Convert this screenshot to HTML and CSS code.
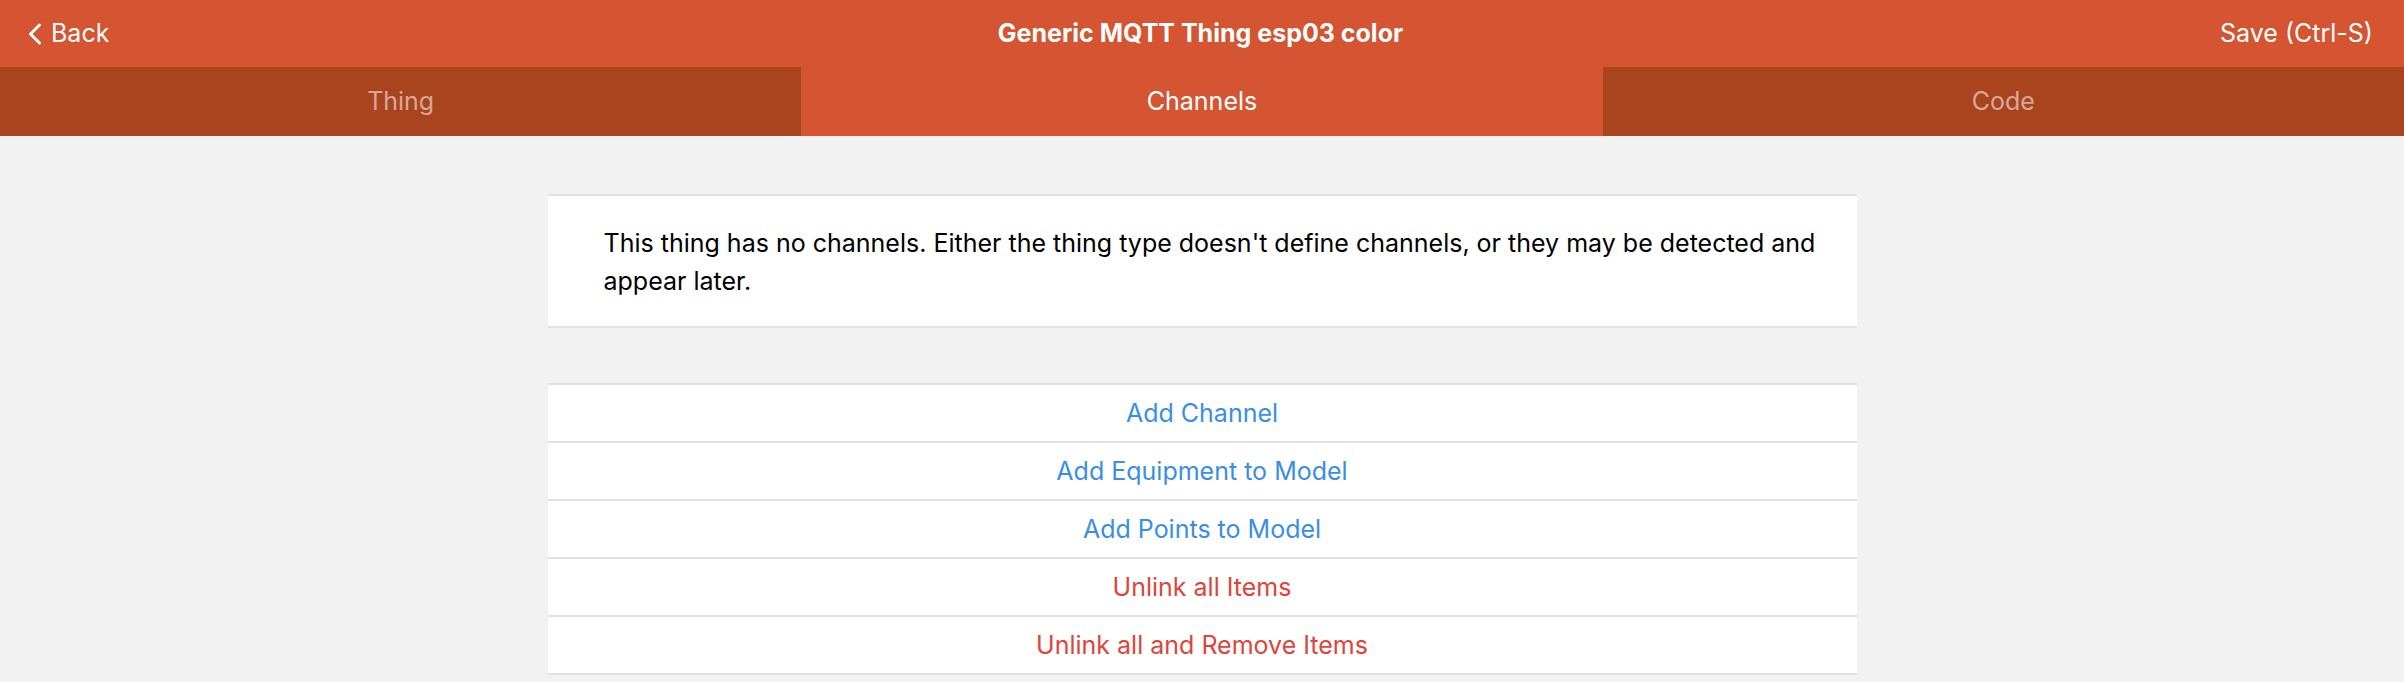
FILE: index.html
```html
<!DOCTYPE html>
<html lang="en">
<head>
<meta charset="utf-8">
<title>Generic MQTT Thing esp03 color</title>
<link rel="stylesheet" href="styles.css">
</head>
<body>
<div class="app">
  <header class="navbar">
    <a class="nav-left" href="#">
      <svg class="chevron" width="14" height="22" viewBox="0 0 14 22" aria-hidden="true"><polyline points="11.5,2 2.5,11 11.5,20" fill="none" stroke="#fff" stroke-width="3" stroke-linecap="round" stroke-linejoin="round"/></svg>
      <span>Back</span>
    </a>
    <div class="nav-title">Generic MQTT Thing esp03 color</div>
    <a class="nav-right" href="#">Save (Ctrl-S)</a>
  </header>
  <nav class="tabbar">
    <a class="tab" href="#">Thing</a>
    <a class="tab active" href="#">Channels</a>
    <a class="tab" href="#">Code</a>
  </nav>
  <main class="page-content">
    <div class="column">
      <div class="block-strong">
        <p class="block-text">This thing has no channels. Either the thing type doesn't define channels, or they may be detected and appear later.</p>
      </div>
      <ul class="list">
        <li class="list-button blue">Add Channel</li>
        <li class="list-button blue">Add Equipment to Model</li>
        <li class="list-button blue">Add Points to Model</li>
        <li class="list-button red">Unlink all Items</li>
        <li class="list-button red">Unlink all and Remove Items</li>
      </ul>
    </div>
  </main>
</div>
</body>
</html>
```

FILE: styles.css
```css
* { box-sizing: border-box; }

html, body {
  margin: 0;
  padding: 0;
  height: 100%;
}

body {
  font-family: "Inter", "Liberation Sans", sans-serif;
  font-size: 25px;
  background: #f2f2f2;
  color: #000;
  -webkit-font-smoothing: antialiased;
}

a { color: inherit; text-decoration: none; }

.app {
  min-height: 100%;
  background: #f2f2f2;
}

.navbar {
  height: 67px;
  background: #d55431;
  color: #fff;
  display: grid;
  grid-template-columns: 1fr auto 1fr;
  align-items: center;
  padding: 0 31px 0 28px;
  line-height: 67px;
}

.nav-left {
  display: flex;
  align-items: center;
  gap: 9px;
  justify-self: start;
}

.chevron { display: block; }

.nav-title {
  font-weight: 700;
  text-align: center;
}

.nav-right {
  justify-self: end;
}

.tabbar {
  height: 69px;
  background: #a9441f;
  display: flex;
}

.tab {
  flex: 1 1 0;
  text-align: center;
  line-height: 69px;
  color: rgba(255, 255, 255, 0.55);
}

.tab.active {
  background: #d55431;
  color: #fff;
}

.page-content {
  padding: 58px 0 40px;
}

.column {
  width: 1309px;
  margin: 0 auto;
  display: flex;
  flex-direction: column;
  gap: 55px;
}

.block-strong {
  background: #fff;
  border-top: 2px solid #e1e1e1;
  border-bottom: 2px solid #e1e1e1;
  padding: 28px 24px 26px 56px;
}

.block-text {
  margin: 0;
  line-height: 38px;
}

.list {
  list-style: none;
  margin: 0;
  padding: 0;
  background: #fff;
  border-top: 2px solid #e1e1e1;
}

.list-button {
  height: 58px;
  line-height: 56px;
  text-align: center;
  border-bottom: 2px solid #e1e1e1;
}

.blue { color: #398ee5; }
.red { color: #e0443a; }
```
